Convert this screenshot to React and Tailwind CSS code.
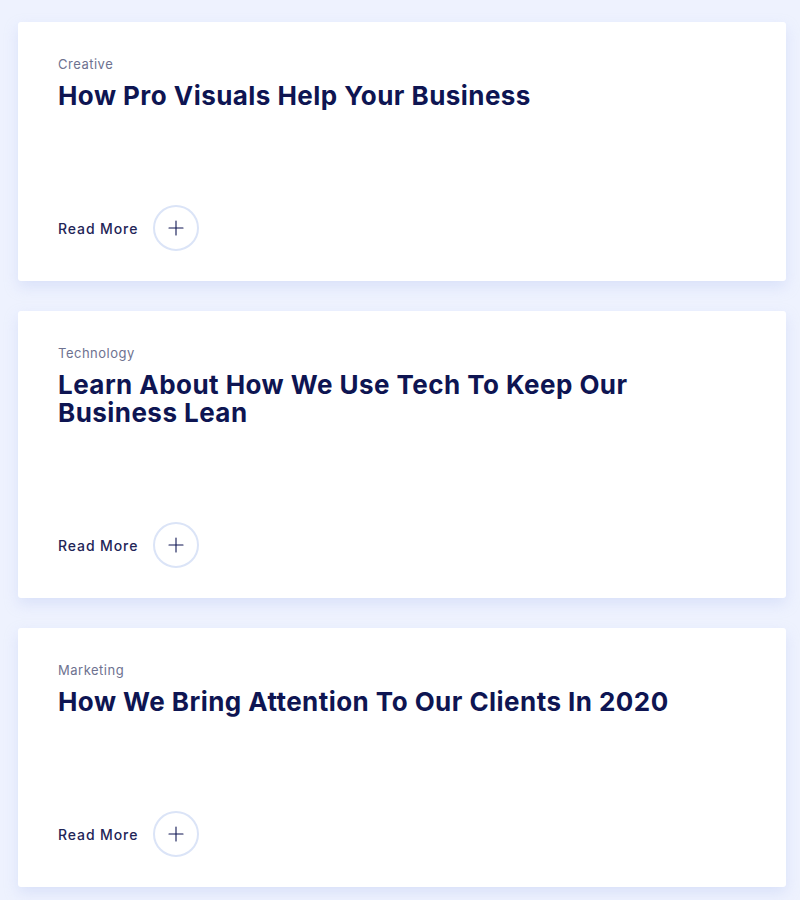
import { Plus } from "lucide-react";

const posts = [
  { category: "Creative", title: "How Pro Visuals Help Your Business" },
  {
    category: "Technology",
    title: "Learn About How We Use Tech To Keep Our Business Lean",
  },
  { category: "Marketing", title: "How We Bring Attention To Our Clients In 2020" },
];

function PostCard({ category, title }) {
  return (
    <div className="bg-white rounded-[3px] shadow-[0_6px_14px_rgba(180,195,240,0.35)] px-10 pt-[32px] pb-[30px]">
      <p className="text-[13px] leading-5 text-[#6e7290] tracking-[0.5px]">{category}</p>
      <h2 className="mt-[8px] max-w-[640px] text-[26px] leading-[28px] font-bold text-[#0e1552] tracking-[0.45px]">
        {title}
      </h2>
      <div className="mt-[95px] flex items-center gap-[15px]">
        <span className="text-[14px] font-medium text-[#1f2557] tracking-[0.9px]">Read More</span>
        <button className="w-[46px] h-[46px] rounded-full border-2 border-[#dbe4f7] flex items-center justify-center text-[#0e1552]">
          <Plus size={24} strokeWidth={1.1} />
        </button>
      </div>
    </div>
  );
}

export default function App() {
  return (
    <div
      className="min-h-[900px] bg-[#eef2fe] pl-[18px] pr-[14px] pt-[22px] pb-[14px] flex flex-col gap-[30px]"
      style={{ fontFamily: "Inter, 'Noto Sans', sans-serif" }}
    >
      {posts.map((p) => (
        <PostCard key={p.category} {...p} />
      ))}
    </div>
  );
}
